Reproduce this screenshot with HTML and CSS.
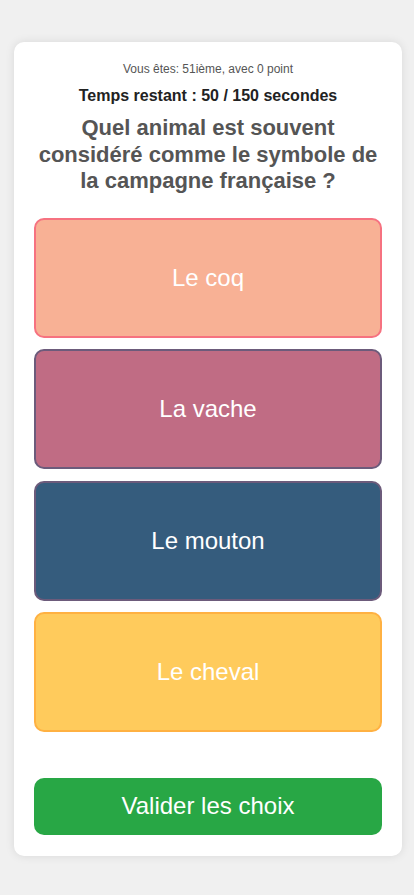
FILE: index.html
```html
<!DOCTYPE html>
<html lang="fr">
<head>
<meta charset="utf-8">
<title>Quiz</title>
<link rel="stylesheet" href="styles.css">
</head>
<body>
<div class="card">
  <p class="rank">Vous êtes: 51ième, avec 0 point</p>
  <p class="timer">Temps restant : 50 / 150 secondes</p>
  <h2 class="question">Quel animal est souvent considéré comme le symbole de la campagne française ?</h2>
  <div class="options">
    <button class="option opt1">Le coq</button>
    <button class="option opt2">La vache</button>
    <button class="option opt3">Le mouton</button>
    <button class="option opt4">Le cheval</button>
  </div>
  <button class="submit">Valider les choix</button>
</div>
</body>
</html>
```

FILE: styles.css
```css
html, body {
  margin: 0;
  padding: 0;
}
body {
  background: #f0f0f0;
  font-family: "Liberation Sans", Arial, sans-serif;
  padding: 42px 12px 39px 14px;
}
.card {
  background: #fff;
  border-radius: 10px;
  box-shadow: 0 0 10px rgba(0, 0, 0, 0.1);
  padding: 20px 20px 21px;
  text-align: center;
}
.rank {
  margin: 0;
  font-size: 12px;
  line-height: 14px;
  color: #555;
}
.timer {
  margin: 11px 0 0;
  font-size: 16px;
  line-height: 18px;
  font-weight: bold;
  color: #222;
}
.question {
  margin: 10px 0 0;
  font-size: 22px;
  line-height: 26.5px;
  font-weight: bold;
  color: #555;
}
.options {
  margin-top: 23px;
  display: flex;
  flex-direction: column;
  gap: 11.5px;
}
.option {
  display: block;
  width: 100%;
  height: 120px;
  border: 2px solid;
  border-radius: 10px;
  font-family: "Liberation Sans", Arial, sans-serif;
  font-size: 24px;
  color: #fff;
  padding: 0;
}
.opt1 { background: #f8b195; border-color: #f67280; }
.opt2 { background: #c06c84; border-color: #6c5b7b; }
.opt3 { background: #355c7d; border-color: #6c5b7b; }
.opt4 { background: #ffcb5c; border-color: #ffb142; }
.submit {
  display: block;
  width: 100%;
  height: 57px;
  margin-top: 45.5px;
  border: none;
  border-radius: 10px;
  background: #28a745;
  color: #fff;
  font-family: "Liberation Sans", Arial, sans-serif;
  font-size: 24px;
  padding: 0;
}
```
